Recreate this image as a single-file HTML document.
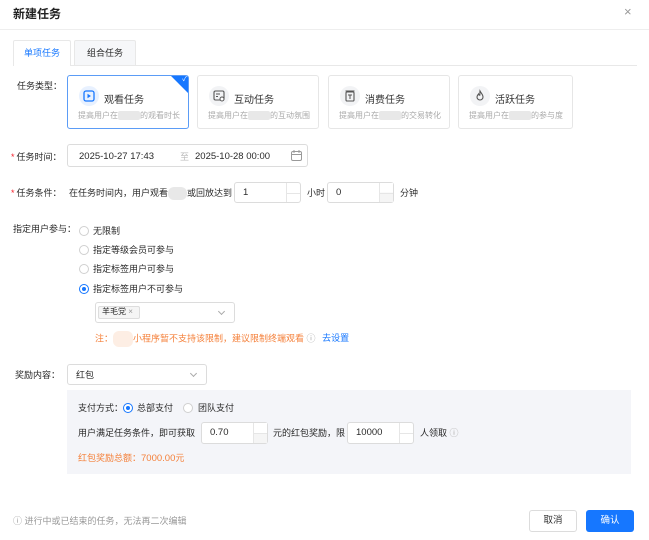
<!DOCTYPE html>
<html><head><meta charset="utf-8"><style>
*{box-sizing:border-box;margin:0;padding:0}
body{width:649px;height:540px;background:#fff;font-family:"Liberation Sans","Noto Sans CJK SC",sans-serif;font-size:9px;color:#333;position:relative;overflow:hidden}
.a{position:absolute}
.lbl{position:absolute;font-size:9px;line-height:12px;color:#2a2a2a;white-space:nowrap}
.n{font-size:9.5px}
.star{color:#f5222d;margin-right:2px}
.inp{position:absolute;border:1px solid #dcdcdc;border-radius:3px;background:#fff}
.card{position:absolute;top:75px;height:54px;border:1px solid #e6e6e6;border-radius:3px;background:#fff}
.card .ic{position:absolute;left:11px;top:10px;width:20px;height:20px;border-radius:50%;background:#f2f3f5}
.card .t{position:absolute;left:36px;top:15px;font-size:10px;color:#333;white-space:nowrap}
.card .d{position:absolute;left:10px;top:34px;font-size:8px;color:#aaa;white-space:nowrap}
.blur{display:inline-block;width:22px;height:9px;background:#e8e8e8;vertical-align:middle;border-radius:2px}
.radio{position:absolute;width:10px;height:10px;border:1px solid #d0d0d0;border-radius:50%;background:#fff}
.radio.on{border-color:#1677ff}
.radio.on:after{content:"";position:absolute;left:2px;top:2px;width:4px;height:4px;border-radius:50%;background:#1677ff}
.spin{position:absolute;right:0;top:0;width:14px;height:100%;border-left:1px solid #e6e6e6}
.spin:after{content:"";position:absolute;left:0;right:0;top:50%;border-top:1px solid #e6e6e6}
.chev{position:absolute;width:5px;height:5px;border-left:1px solid #aaa;border-top:1px solid #aaa}
</style></head><body>
<div class="lbl" style="left:13px;top:7px;font-size:12px;line-height:14px;font-weight:bold;color:#222">新建任务</div>
<div class="lbl" style="left:624px;top:6px;font-size:13px;color:#999">×</div>
<div class="a" style="left:0;top:29px;width:649px;border-top:1px solid #eee"></div>

<div class="a" style="left:13px;top:65px;width:624px;border-top:1px solid #e8e8e8"></div>
<div class="a" style="left:13px;top:40px;width:58px;height:26px;border:1px solid #e8e8e8;border-bottom:none;background:#fff;border-radius:2px 2px 0 0"></div>
<div class="lbl" style="left:24px;top:47px;color:#1677ff">单项任务</div>
<div class="a" style="left:74px;top:40px;width:62px;height:25px;border:1px solid #e8e8e8;border-bottom:none;background:#f6f7f9;border-radius:2px 2px 0 0"></div>
<div class="lbl" style="left:87px;top:47px">组合任务</div>

<div class="lbl" style="left:17px;top:80px">任务类型：</div>
<div class="card" style="left:67px;width:122px;border-color:#5b9cf6;overflow:hidden">
 <div class="ic" style="background:#e8f1ff"><svg width="20" height="20"><rect x="5" y="5" width="10" height="10" rx="2" fill="none" stroke="#1677ff" stroke-width="1.3"/><path d="M8.5 7.8v4.4l3.4-2.2z" fill="#1677ff"/></svg></div>
 <div class="t">观看任务</div>
 <div class="d">提高用户在<span class="blur"></span>的观看时长</div>
 <div class="a" style="right:-12px;top:-12px;width:24px;height:24px;background:#1677ff;transform:rotate(45deg)"></div>
 <div class="lbl" style="right:1px;top:-2px;color:#fff;font-size:7px">✓</div>
</div>
<div class="card" style="left:197px;width:122px">
 <div class="ic"><svg width="20" height="20"><rect x="5" y="5" width="10" height="9" rx="1.5" fill="none" stroke="#555" stroke-width="1.1"/><path d="M7 8h4M7 10.5h2" stroke="#555"/><circle cx="13" cy="13" r="2" fill="#fff" stroke="#555"/></svg></div>
 <div class="t">互动任务</div>
 <div class="d">提高用户在<span class="blur"></span>的互动氛围</div>
</div>
<div class="card" style="left:328px;width:122px">
 <div class="ic"><svg width="20" height="20"><rect x="6" y="6" width="8" height="9" rx="1" fill="none" stroke="#555" stroke-width="1.1"/><path d="M5.5 5h9M8 9h4M10 9v4" stroke="#555"/></svg></div>
 <div class="t">消费任务</div>
 <div class="d">提高用户在<span class="blur"></span>的交易转化</div>
</div>
<div class="card" style="left:458px;width:115px">
 <div class="ic"><svg width="20" height="20"><path d="M10 5c1 2 3 3.5 3 6a3 3 0 0 1-6 0c0-1.5 1-2.2 1.5-3 .3 1 .8 1.2 1.3 1.2C10 8 9.8 6.5 10 5z" fill="none" stroke="#555" stroke-width="1.1"/></svg></div>
 <div class="t">活跃任务</div>
 <div class="d">提高用户在<span class="blur"></span>的参与度</div>
</div>

<div class="lbl" style="left:11px;top:151px"><span class="star">*</span>任务时间：</div>
<div class="inp" style="left:67px;top:144px;width:241px;height:23px"></div>
<div class="lbl n" style="left:79px;top:151px">2025-10-27 17:43</div>
<div class="lbl" style="left:180px;top:151px;color:#bbb">至</div>
<div class="lbl n" style="left:195px;top:151px">2025-10-28 00:00</div>
<svg class="a" style="left:291px;top:150px" width="11" height="11"><rect x="0.5" y="1.5" width="10" height="9" rx="1.5" fill="none" stroke="#999"/><path d="M0.5 4.5h10M3 0v3M8 0v3" stroke="#999"/></svg>

<div class="lbl" style="left:11px;top:187px"><span class="star">*</span>任务条件：</div>
<div class="lbl" style="left:69px;top:187px">在任务时间内，用户观看<span class="blur" style="width:19px;height:13px;border-radius:6px"></span>或回放达到</div>
<div class="inp" style="left:234px;top:182px;width:67px;height:21px"><div class="spin"></div></div>
<div class="lbl n" style="left:243px;top:187px">1</div>
<div class="lbl" style="left:307px;top:187px">小时</div>
<div class="inp" style="left:327px;top:182px;width:67px;height:21px"><div class="spin" style="background:linear-gradient(#fff 50%,#f5f5f5 50%)"></div></div>
<div class="lbl n" style="left:336px;top:187px">0</div>
<div class="lbl" style="left:400px;top:187px">分钟</div>

<div class="lbl" style="left:13px;top:223px">指定用户参与：</div>
<div class="radio" style="left:79px;top:226px"></div><div class="lbl" style="left:93px;top:225px">无限制</div>
<div class="radio" style="left:79px;top:245px"></div><div class="lbl" style="left:93px;top:244px">指定等级会员可参与</div>
<div class="radio" style="left:79px;top:264px"></div><div class="lbl" style="left:93px;top:263px">指定标签用户可参与</div>
<div class="radio on" style="left:79px;top:284px"></div><div class="lbl" style="left:93px;top:283px">指定标签用户不可参与</div>

<div class="inp" style="left:95px;top:302px;width:140px;height:21px"></div>
<div class="a" style="left:98px;top:306px;width:42px;height:13px;border:1px solid #ddd;background:#f5f5f5;border-radius:2px"></div>
<div class="lbl" style="left:102px;top:306px;font-size:8px">羊毛党 <span style="color:#999">×</span></div>
<div class="chev" style="left:219px;top:309px;transform:rotate(225deg)"></div>

<div class="lbl" style="left:95px;top:331px;color:#f5813b">注：<span style="display:inline-block;width:20px;height:16px;background:#fdeee4;border-radius:6px;vertical-align:middle"></span>小程序暂不支持该限制，建议限制终端观看 <span style="color:#aaa">ⓘ</span> <span style="color:#1677ff;margin-left:4px">去设置</span></div>

<div class="lbl" style="left:15px;top:369px">奖励内容：</div>
<div class="inp" style="left:67px;top:364px;width:140px;height:21px"></div>
<div class="lbl" style="left:76px;top:369px">红包</div>
<div class="chev" style="left:191px;top:371px;transform:rotate(225deg)"></div>

<div class="a" style="left:67px;top:390px;width:564px;height:84px;background:#f4f5f9"></div>
<div class="lbl" style="left:78px;top:402px">支付方式：</div>
<div class="radio on" style="left:123px;top:403px"></div><div class="lbl" style="left:137px;top:402px">总部支付</div>
<div class="radio" style="left:183px;top:403px"></div><div class="lbl" style="left:198px;top:402px">团队支付</div>
<div class="lbl" style="left:78px;top:427px">用户满足任务条件，即可获取</div>
<div class="inp" style="left:201px;top:422px;width:67px;height:22px"><div class="spin" style="background:linear-gradient(#fff 50%,#f5f5f5 50%)"></div></div>
<div class="lbl n" style="left:210px;top:427px">0.70</div>
<div class="lbl" style="left:273px;top:427px">元的红包奖励，限</div>
<div class="inp" style="left:347px;top:422px;width:67px;height:22px"><div class="spin"></div></div>
<div class="lbl n" style="left:356px;top:427px">10000</div>
<div class="lbl" style="left:420px;top:427px">人领取 <span style="color:#aaa">ⓘ</span></div>
<div class="lbl" style="left:78px;top:452px;color:#f5813b">红包奖励总额：<span class="n">7000.00</span>元</div>

<div class="lbl" style="left:13px;top:515px;color:#999">ⓘ 进行中或已结束的任务，无法再二次编辑</div>
<div class="a" style="left:529px;top:510px;width:48px;height:22px;border:1px solid #dcdcdc;border-radius:3px;background:#fff;text-align:center;line-height:20px;font-size:9.5px">取消</div>
<div class="a" style="left:586px;top:510px;width:48px;height:22px;border-radius:3px;background:#1677ff;color:#fff;text-align:center;line-height:22px;font-size:9.5px">确认</div>
</body></html>
